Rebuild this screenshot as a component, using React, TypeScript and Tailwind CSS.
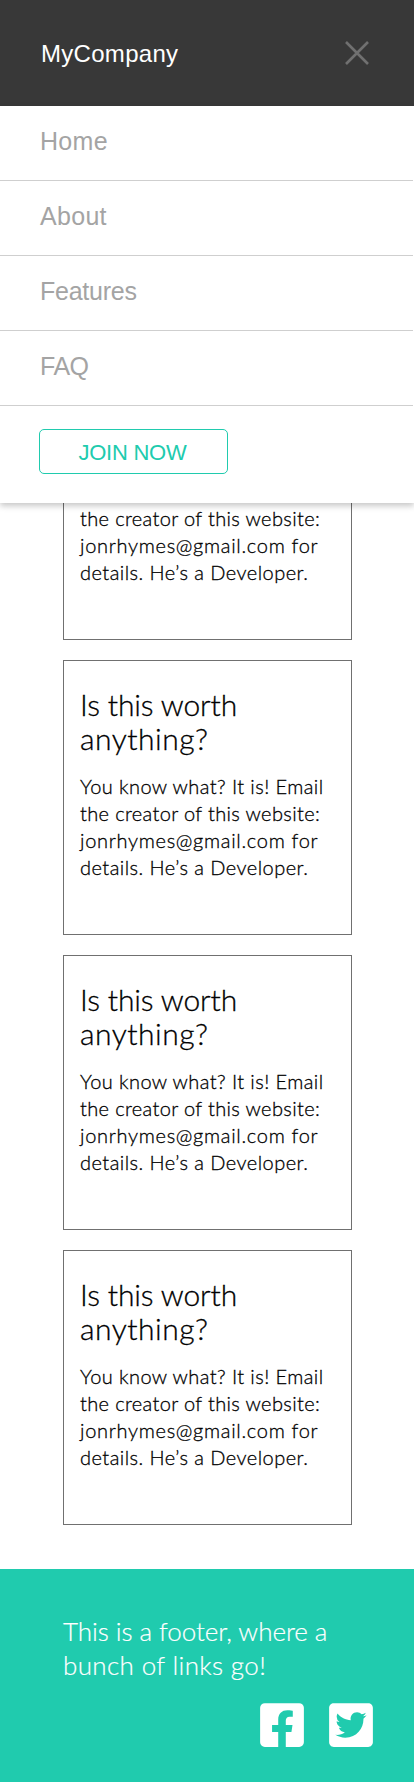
import { FaFacebookSquare, FaTwitterSquare } from "react-icons/fa";

const menuItems = [
  { label: "Home", spacing: "tracking-[0.3px]" },
  { label: "About", spacing: "tracking-[0.3px]" },
  { label: "Features", spacing: "tracking-[-0.25px]" },
  { label: "FAQ", spacing: "tracking-[-0.5px]" },
];

const lines = [
  { text: "You know what? It is! Email", spacing: "block tracking-[0.42px]" },
  { text: "the creator of this website:", spacing: "block tracking-[0.36px]" },
  { text: "jonrhymes@gmail.com for", spacing: "block tracking-[0.7px]" },
  { text: "details. He’s a Developer.", spacing: "block tracking-[0.46px]" },
];

function Lines({ from = 0 }: { from?: number }) {
  return (
    <p className="text-[20px] leading-[27px] [-webkit-text-stroke:0.3px]">
      {lines.slice(from).map((line) => (
        <span key={line.text} className={line.spacing}>{line.text}</span>
      ))}
    </p>
  );
}

function Card() {
  return (
    <article className="h-[275px] w-[289px] border border-[#707070] bg-white pt-[26px] pl-4 whitespace-nowrap text-black">
      <h2 className="mb-[18px] text-[30px] leading-[34px] [-webkit-text-stroke:0.3px]">
        <span className="block tracking-[-0.13px]">Is this worth</span>
        <span className="block tracking-[0.5px]">anything?</span>
      </h2>
      <Lines />
    </article>
  );
}

// The part of the first card that shows below the open menu.
function CardTail() {
  return (
    <article className="h-[137px] w-[289px] border border-t-0 border-[#707070] bg-white pt-[2px] pl-4 whitespace-nowrap text-black">
      <Lines from={1} />
    </article>
  );
}

function Menu() {
  return (
    <nav className="relative z-10 h-[397px] bg-white font-['Liberation_Sans',sans-serif] shadow-[0_3px_6px_rgba(0,0,0,0.22)]">
      <ul className="mr-px">
        {menuItems.map((item) => (
          <li
            key={item.label}
            className="flex h-[75px] items-center border-b border-[#cfcfcf] pb-[3px] pl-10 text-[25px] leading-none text-[#a4a4a4]"
          >
            <span className={item.spacing}>{item.label}</span>
          </li>
        ))}
      </ul>
      <button className="mt-[23px] ml-[39px] flex h-[45px] w-[189px] items-center justify-center rounded-[5px] border border-[#20cbae] pt-0.5 pr-0.5 text-[22px] leading-none tracking-[-0.25px] text-[#20cbae]">
        JOIN NOW
      </button>
    </nav>
  );
}

export default function App() {
  return (
    <div className="flex min-h-[1782px] w-[414px] flex-col bg-white font-['Lato',sans-serif] font-light">
      <header className="flex h-[106px] items-center justify-between bg-[#383838] pr-[45px] pl-[41px]">
        <span className="pt-0.5 font-['Liberation_Sans',sans-serif] text-[24px] leading-none tracking-[0.3px] text-white">MyCompany</span>
        <button aria-label="Close menu">
          <svg className="block size-6" viewBox="0 0 24 24" fill="none" stroke="#707070" strokeWidth="2.6">
            <path d="M1 1l22 22M23 1L1 23" />
          </svg>
        </button>
      </header>
      <Menu />
      <main className="flex flex-col gap-5 pb-11 pl-[63px]">
        <CardTail />
        <Card />
        <Card />
        <Card />
      </main>
      <footer className="h-[213px] bg-[#20cbae] pt-[45px] pl-[63px] text-white">
        <p className="text-[26px] leading-[34px] whitespace-nowrap [-webkit-text-stroke:0.2px]">
          <span className="block tracking-[-0.06px]">This is a footer, where a</span>
          <span className="block tracking-[0.35px]">bunch of links go!</span>
        </p>
        <div className="mt-[18px] flex justify-end gap-[25px] pr-[41px]">
          <FaFacebookSquare className="h-[50px] w-11" />
          <FaTwitterSquare className="h-[50px] w-11" />
        </div>
      </footer>
    </div>
  );
}
